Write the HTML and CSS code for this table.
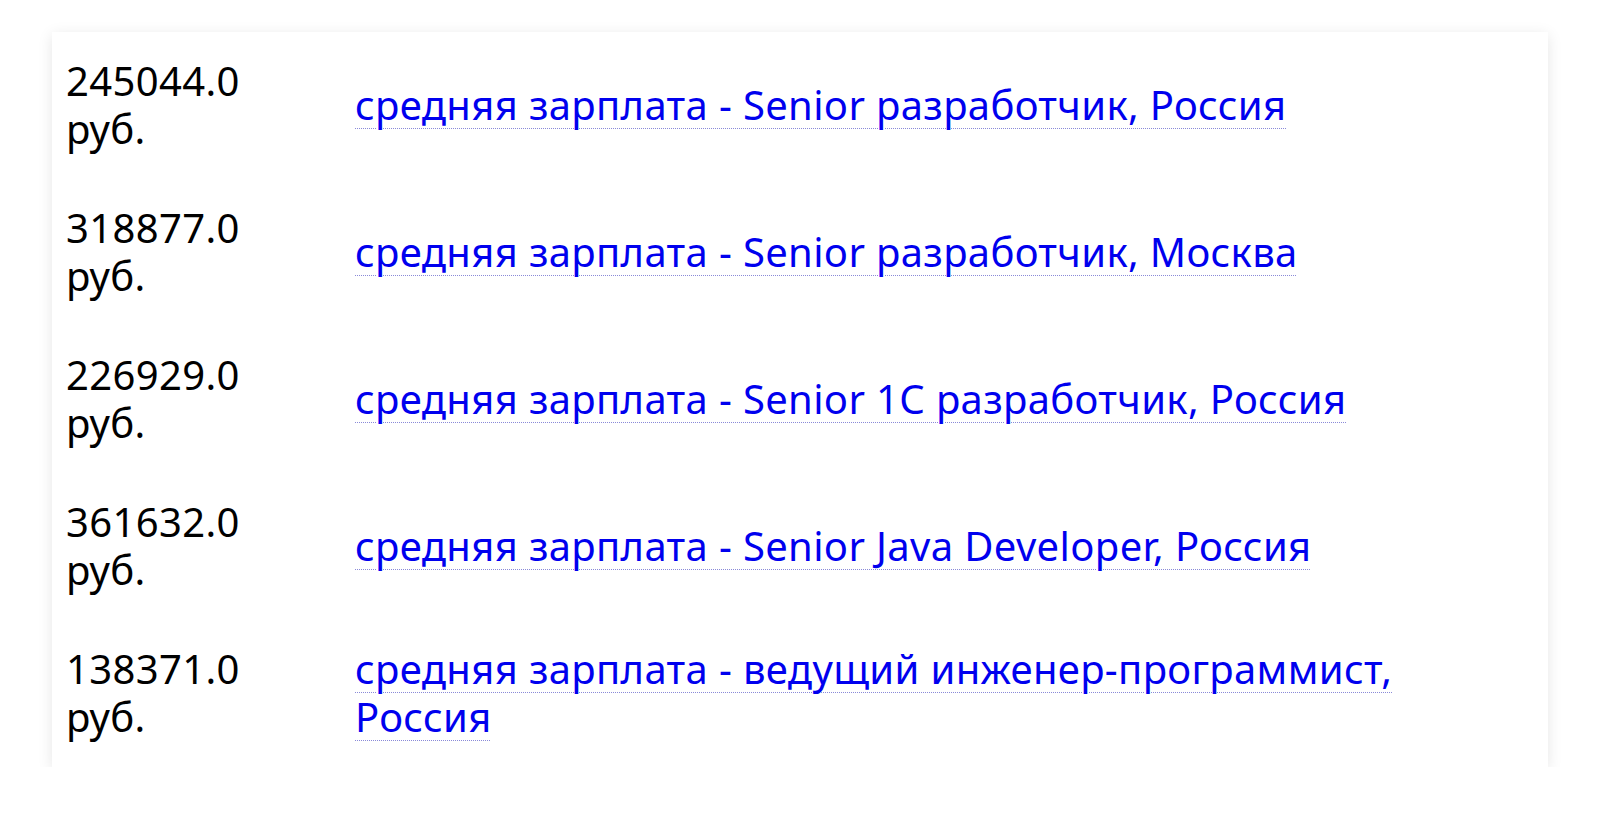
FILE: index.html
```html
<!DOCTYPE html>
<html lang="ru">
<head>
<meta charset="utf-8">
<title>Зарплаты</title>
<link rel="stylesheet" href="styles.css">
</head>
<body>
<div class="card">
  <div class="row">
    <div class="price">245044.0 руб.</div>
    <div class="title"><a href="#">средняя зарплата - Senior разработчик, Россия</a></div>
  </div>
  <div class="row">
    <div class="price">318877.0 руб.</div>
    <div class="title"><a href="#">средняя зарплата - Senior разработчик, Москва</a></div>
  </div>
  <div class="row">
    <div class="price">226929.0 руб.</div>
    <div class="title"><a href="#">средняя зарплата - Senior 1С разработчик, Россия</a></div>
  </div>
  <div class="row">
    <div class="price">361632.0 руб.</div>
    <div class="title"><a href="#">средняя зарплата - Senior Java Developer, Россия</a></div>
  </div>
  <div class="row">
    <div class="price">138371.0 руб.</div>
    <div class="title"><a href="#">средняя зарплата - ведущий инженер-программист, Россия</a></div>
  </div>
</div>
</body>
</html>
```
FILE: styles.css
```css
html, body {
  margin: 0;
  padding: 0;
  background: #ffffff;
}
body {
  font-family: "Noto Sans", "Open Sans", sans-serif;
  font-size: 40px;
  line-height: 48px;
  letter-spacing: 0.35px;
  color: #000000;
}
.card {
  margin: 32px 52px 0 52px;
  background: #ffffff;
  box-shadow: 0 3px 14px rgba(0, 0, 0, 0.1);
}
.row {
  display: grid;
  grid-template-columns: 200px 1100px;
  column-gap: 89px;
  align-items: center;
  padding: 25px 14px 26px 14px;
}
.price {
  color: #000000;
}
.title a {
  color: #0000ee;
  text-decoration: underline dotted 1px;
  text-decoration-color: #8a8ad8;
  text-underline-offset: 8px;
}
```
